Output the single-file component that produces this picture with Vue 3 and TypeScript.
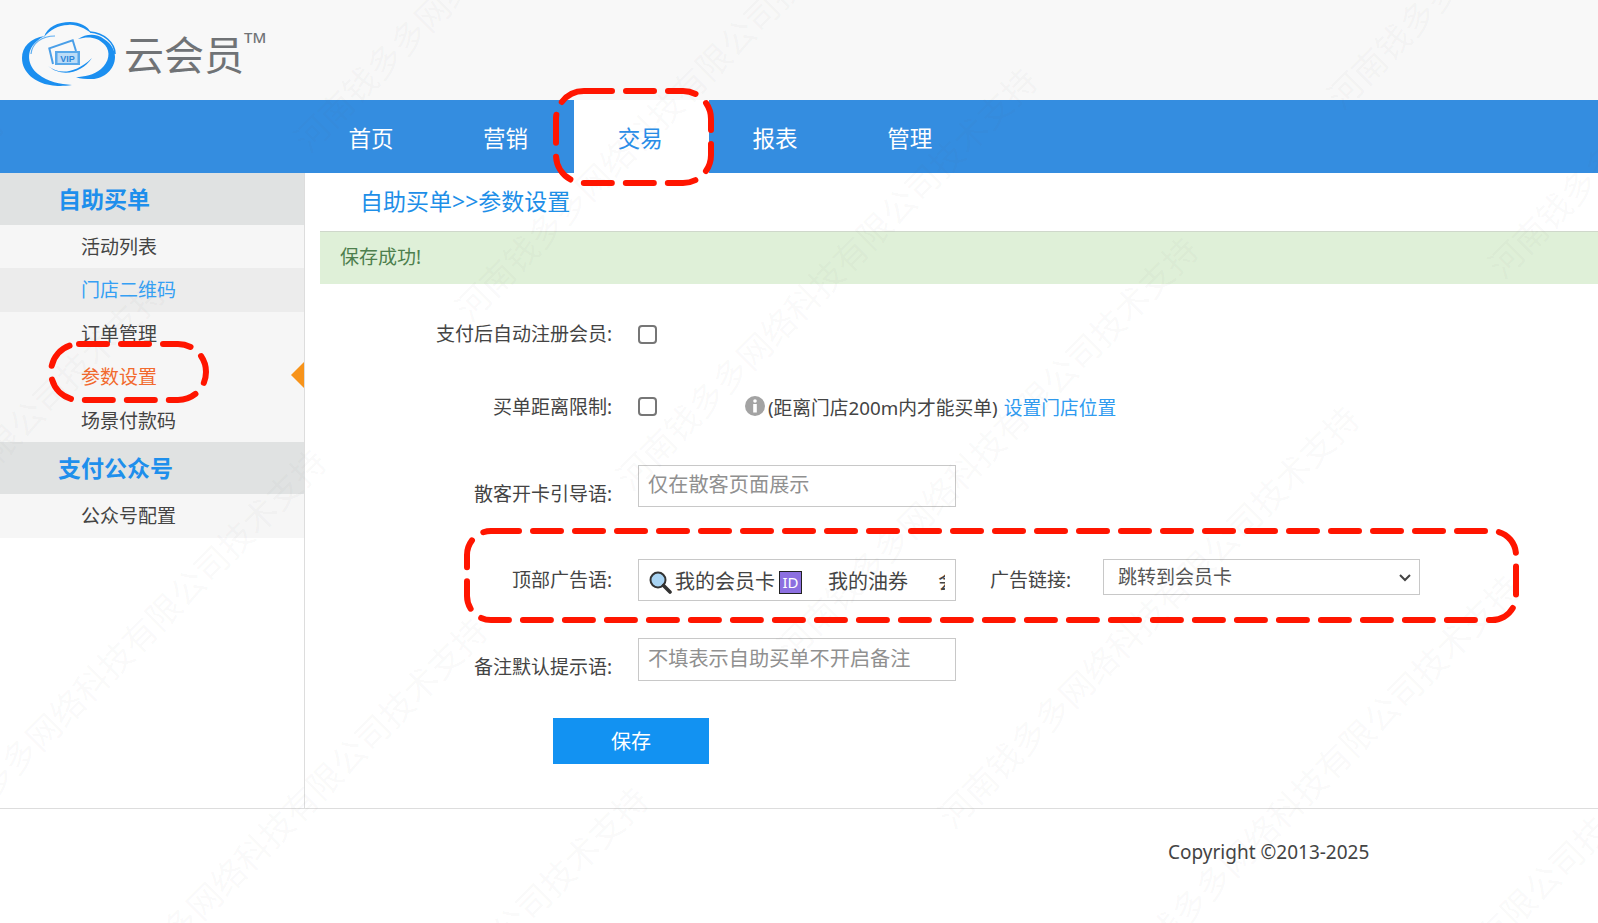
<script setup lang="ts">
const navItems = ['首页', '营销', '交易', '报表', '管理']
interface SideItem { label: string; state?: 'hover' | 'current' }
const groups: { title: string; items: SideItem[] }[] = [
  { title: '自助买单', items: [
    { label: '活动列表' },
    { label: '门店二维码', state: 'hover' },
    { label: '订单管理' },
    { label: '参数设置', state: 'current' },
    { label: '场景付款码' },
  ] },
  { title: '支付公众号', items: [{ label: '公众号配置' }] },
]
const wm = '河南钱多多网络科技有限公司技术支持'
// Watermark lattice read from the reference: repeats along the diagonal and between diagonals.
const marks: { x: number; y: number }[] = []
for (let k = -8; k <= 4; k++) {
  for (let j = -4; j <= 4; j++) {
    const x = 956 + k * 161 + j * 550
    const y = 833 + k * 169 - j * 550
    if (x < 1650 && y > -40 && x > -460 && y < 1350) marks.push({ x, y })
  }
}
</script>

<template>
  <div class="page">
    <header class="top">
      <div class="logo">
        <svg class="cloud" width="94" height="66" viewBox="0 0 94 66" fill="none">
          <g fill="#1b8ff0">
            <path d="M23 15C8 17 0 26 0 37c0 15 14 25 28 27 8 1.500 14 1 22 0-12-1-24-3-34-11C5 44 4 30 14 21c3-3 6-5 9-6Z" />
            <path d="M22 16C25 6 36 1 48 1c10 0 18 4 21 11-7-5-15-9-23-8-10 0-18 5-24 12Z" />
            <path d="M56 18c8-5 18-6 26 0 8 5 11 12 11 18 0 12-11 22-23 22-6 0-12 0-16-2 8 0 18-2 25-8 8-7 10-17 4-24-7-8-17-9-27-6Z" />
            <path d="M26 45c10 8 26 9 44-8-10 15-30 20-44 8Z" />
          </g>
          <path d="M68 11c14 1 25 11 25 22" stroke="#1b8ff0" stroke-width="1.6" />
          <path d="M9 33c1-11 11-18 24-18" stroke="#1b8ff0" stroke-width="1.2" opacity=".7" />
          <path d="M31 43 27.300 27.300 50.700 19.300 54 30" stroke="#4a9fe8" stroke-width="2" />
          <rect x="33" y="30" width="25" height="14" fill="#5aa9ea" />
          <rect x="35.500" y="32" width="20" height="10" fill="#bcdcf7" />
          <text x="45.500" y="40.500" text-anchor="middle" class="vip">VIP</text>
        </svg>
        <span class="brand">云会员</span><sup class="tm">TM</sup>
      </div>
    </header>

    <nav class="nav">
      <a v-for="n in navItems" :key="n" class="nav-item" :class="{ active: n === '交易' }">{{ n }}</a>
    </nav>

    <div class="body">
      <aside class="side">
        <section v-for="g in groups" :key="g.title">
          <h3 class="side-title">{{ g.title }}</h3>
          <a v-for="i in g.items" :key="i.label" class="side-item" :class="i.state">{{ i.label }}</a>
        </section>
      </aside>

      <main class="content">
        <h2 class="crumb">自助买单&gt;&gt;参数设置</h2>
        <div class="alert">保存成功!</div>
        <form class="form" @submit.prevent>
          <div class="row row-check first">
            <label class="lbl">支付后自动注册会员:</label>
            <span class="check"></span>
          </div>
          <div class="row row-check second">
            <label class="lbl">买单距离限制:</label>
            <span class="check"></span>
            <span class="hint">
              <svg width="20" height="20" viewBox="0 0 20 20"><circle cx="10" cy="10" r="10" fill="#a3a3a3"/><circle cx="10" cy="5" r="1.800" fill="#fff"/><rect x="8.200" y="8" width="3.600" height="8.500" fill="#fff"/></svg>
              <span>(距离门店200m内才能买单)</span>
              <a class="link">设置门店位置</a>
            </span>
          </div>
          <div class="row third">
            <label class="lbl low">散客开卡引导语:</label>
            <div class="input ph">仅在散客页面展示</div>
          </div>
          <div class="row fourth">
            <label class="lbl">顶部广告语:</label>
            <div class="input value">
              <span class="clip">
                <svg class="lens" width="23" height="23" viewBox="0 0 23 23">
                  <circle cx="9" cy="9" r="7.500" fill="#a9d4f3" stroke="#333" stroke-width="2"/>
                  <path d="M14.500 14.500l6.500 6.500" stroke="#333" stroke-width="3.600" stroke-linecap="round"/>
                </svg>
                <span>我的会员卡</span>
                <span class="id">ID</span>
                <span class="gap">我的油券</span>
                <span class="gap2">会员</span>
              </span>
            </div>
            <label class="lbl2">广告链接:</label>
            <div class="select">
              <span>跳转到会员卡</span>
              <svg width="14" height="9" viewBox="0 0 14 9" fill="none"><path d="M2 2l5 5 5-5" stroke="#444" stroke-width="2"/></svg>
            </div>
          </div>
          <div class="row fifth">
            <label class="lbl low">备注默认提示语:</label>
            <div class="input ph tall">不填表示自助买单不开启备注</div>
          </div>
          <button class="save" type="button">保存</button>
        </form>
      </main>
    </div>

    <footer class="foot">Copyright ©2013-2025</footer>

    <div class="watermarks" aria-hidden="true">
      <span v-for="(m, i) in marks" :key="i" class="wm" :style="{ left: m.x + 'px', top: m.y - 34 + 'px' }">{{ wm }}</span>
    </div>

    <svg class="marks" width="1598" height="923" fill="none">
      <rect x="556" y="91" width="155" height="92" rx="28" class="dash" />
      <rect x="51" y="344" width="155" height="56" rx="28" class="dash" />
      <rect x="467" y="531" width="1049" height="89" rx="24" class="dash" />
    </svg>
  </div>
</template>

<style>
html, body { margin: 0; background: #fff; }
</style>

<style scoped>
.page {
  position: relative;
  width: 1598px;
  height: 923px;
  overflow: hidden;
  font-family: "Noto Sans", "Noto Sans CJK SC", sans-serif;
  color: #444;
  font-size: 19px;
}
.top {
  height: 100px;
  background: #f8f8f8;
  padding-left: 22px;
  box-sizing: border-box;
}
.logo { display: flex; align-items: flex-start; padding-top: 21px; }
.cloud { flex: none; }
.vip { font: 700 9px "Liberation Sans", sans-serif; fill: #2f86d8; }
.brand {
  margin-left: 8px;
  margin-top: 5px;
  font-size: 40px;
  line-height: 54px;
  color: #707376;
  font-family: "Noto Sans CJK SC", sans-serif;
  font-weight: 400;
}
.tm { font-size: 15px; line-height: 16px; color: #707376; margin-top: 8px; font-weight: 500; }
.nav {
  display: flex;
  height: 73px;
  background: #348de0;
  padding-left: 304.6px;
}
.nav-item {
  width: 134.7px;
  text-align: center;
  line-height: 77px;
  font-size: 22.5px;
  color: #fff;
  text-indent: -2px;
}
.nav-item.active { background: #fff; color: #2a8ee8; }
.body { display: flex; height: 635px; border-bottom: 1px solid #ddd; }
.side { width: 304px; border-right: 1px solid #ddd; flex: none; }
.side-title {
  margin: 0;
  height: 52px;
  line-height: 52px;
  padding-left: 58px;
  background: #e0e2e2;
  color: #1e8fec;
  font-size: 23px;
  font-weight: 700;
}
.side-item {
  position: relative;
  display: block;
  height: 43.4px;
  line-height: 45.4px;
  padding-left: 81px;
  background: #f6f6f6;
  color: #444;
}
section:last-child .side-item { height: 44px; }
.side-item.hover { background: #ececec; color: #35a0f4; }
.side-item.current { color: #f26a2e; }
.side-item.current::after {
  content: "";
  position: absolute;
  right: 0;
  top: 7px;
  border-style: solid;
  border-width: 13px 13px 13px 0;
  border-color: transparent #f7931a transparent transparent;
}
.content { flex: 1; padding-left: 15px; min-width: 0; }
.crumb {
  margin: 0;
  height: 58px;
  line-height: 56px;
  padding-left: 40px;
  font-size: 23px;
  font-weight: 400;
  color: #1e8fe8;
}
.alert {
  height: 53px;
  line-height: 50px;
  padding-left: 20px;
  background: #dff0d8;
  border-top: 1px solid #cfd8cb;
  box-sizing: border-box;
  color: #4d7f4d;
}
.form { display: flex; flex-direction: column; }
.row { display: flex; align-items: center; }
.first { margin-top: 31px; height: 38px; }
.second { margin-top: 34px; height: 38px; }
.third { margin-top: 40px; }
.fourth { margin-top: 52px; align-items: flex-start; }
.fifth { margin-top: 37px; }
.lbl { width: 292px; flex: none; text-align: right; margin-right: 26px; white-space: nowrap; line-height: 34px; }
.second .lbl { position: relative; top: 1px; }
.fourth .lbl { line-height: 42px; }
.low { position: relative; top: 8px; }
.fifth .low { top: 7px; }
.check {
  width: 15px;
  height: 15px;
  border: 2px solid #767676;
  border-radius: 4px;
  background: #fff;
  flex: none;
}
.hint { display: flex; align-items: center; margin-left: 88px; white-space: nowrap; font-size: 18.75px; }
.hint svg { margin-right: 3px; }
.link { color: #2f9bf0; margin-left: 6px; }
.input {
  width: 318px;
  height: 42px;
  box-sizing: border-box;
  border: 1px solid #c8c8c8;
  padding-left: 9px;
  font-size: 20.2px;
  line-height: 37px;
  background: #fff;
  flex: none;
  white-space: nowrap;
  overflow: hidden;
}
.tall { height: 43px; line-height: 39px; }
.ph { color: #909090; }
.value { display: flex; align-items: center; line-height: 38px; color: #444; padding-left: 8px; padding-top: 4px; font-size: 20px; }
.clip { display: flex; align-items: center; width: 298px; overflow: hidden; }
.lens { flex: none; margin: 0 3px 0 2px; }
.id {
  flex: none;
  width: 23px;
  height: 23px;
  margin-left: 4px;
  box-sizing: border-box;
  border: 1px solid #222;
  background: #8c6fe0;
  color: #fff;
  font-size: 15px;
  line-height: 20px;
  text-align: center;
}
.gap { margin-left: 26px; flex: none; }
.gap2 { margin-left: 30px; flex: none; }
.lbl2 { margin-left: 34px; width: 113px; flex: none; line-height: 42px; white-space: nowrap; }
.select {
  width: 317px;
  height: 36px;
  box-sizing: border-box;
  border: 1px solid #c8c8c8;
  display: flex;
  align-items: center;
  justify-content: space-between;
  padding: 0 7px 2px 14px;
  background: #fff;
  color: #555;
}
.select svg { margin-top: 2px; }
.save {
  margin: 37px 0 0 233px;
  width: 156px;
  height: 46px;
  border: 0;
  background: #1292f2;
  color: #fff;
  font: inherit;
  font-size: 20px;
  padding-bottom: 3px;
}
.foot {
  height: 114px;
  box-sizing: border-box;
  padding: 30px 0 0 1168px;
  white-space: nowrap;
  color: #444;
}
.watermarks { position: absolute; inset: 0; pointer-events: none; }
.wm {
  position: absolute;
  white-space: nowrap;
  font-size: 34px;
  line-height: 34px;
  color: rgba(100, 100, 100, 0.045);
  transform: rotate(-45deg);
  transform-origin: left bottom;
}
.marks { position: absolute; left: 0; top: 0; pointer-events: none; }
.dash {
  stroke: #ff1500;
  stroke-width: 6;
  stroke-linecap: round;
  stroke-dasharray: 28 14;
}
</style>
